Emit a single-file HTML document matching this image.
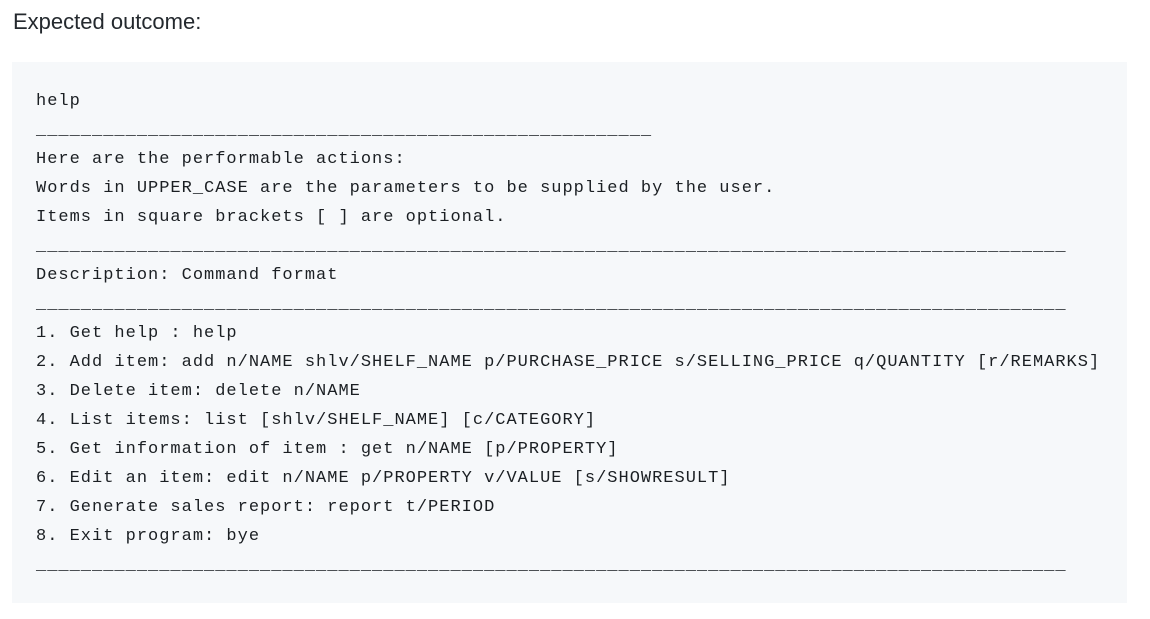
<!DOCTYPE html>
<html><head><style>
html,body{margin:0;padding:0;background:#fff;width:1150px;height:619px;overflow:hidden}
.h{position:absolute;left:13px;top:9px;font-family:"Liberation Sans",sans-serif;font-size:22px;color:#24292e;}
.b{position:absolute;left:12px;top:62px;width:1115px;height:541px;background:#f6f8fa;}
pre{position:absolute;left:36px;top:87px;margin:0;font-family:"Liberation Mono",monospace;font-size:17px;letter-spacing:1.0px;line-height:29px;color:#1b1f23;}
</style></head><body>
<div class="h">Expected outcome:</div>
<div class="b"></div>
<pre>help
_______________________________________________________
Here are the performable actions:
Words in UPPER_CASE are the parameters to be supplied by the user.
Items in square brackets [ ] are optional.
____________________________________________________________________________________________
Description: Command format
____________________________________________________________________________________________
1. Get help : help
2. Add item: add n/NAME shlv/SHELF_NAME p/PURCHASE_PRICE s/SELLING_PRICE q/QUANTITY [r/REMARKS]
3. Delete item: delete n/NAME
4. List items: list [shlv/SHELF_NAME] [c/CATEGORY]
5. Get information of item : get n/NAME [p/PROPERTY]
6. Edit an item: edit n/NAME p/PROPERTY v/VALUE [s/SHOWRESULT]
7. Generate sales report: report t/PERIOD
8. Exit program: bye
____________________________________________________________________________________________</pre>
</body></html>
